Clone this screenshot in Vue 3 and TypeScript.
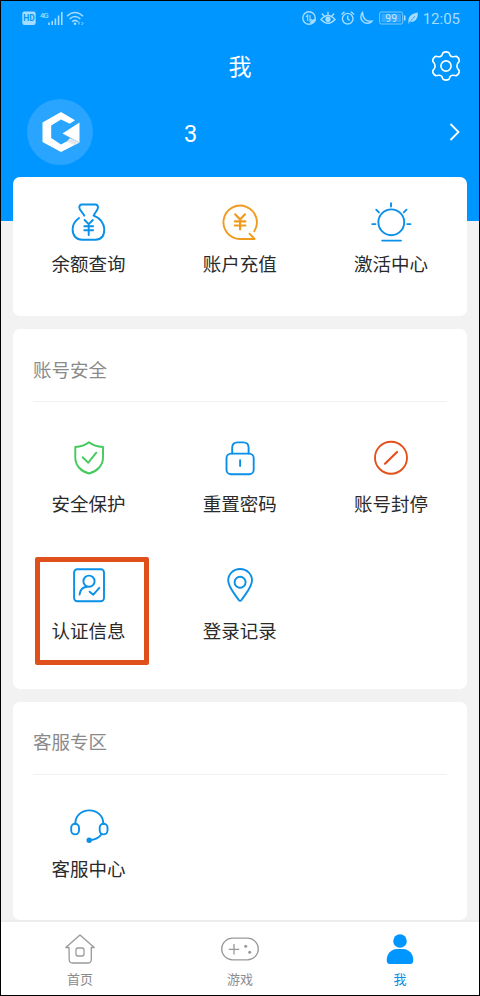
<script setup lang="ts">
interface Entry {
  icon: string
  label: string
  tone: string
  marked?: boolean
}
interface Section {
  key: string
  title?: string
  items: Entry[]
}

const sections: Section[] = [
  {
    key: 'wallet',
    items: [
      { icon: 'bag', label: '余额查询', tone: 'blue' },
      { icon: 'recharge', label: '账户充值', tone: 'amber' },
      { icon: 'bulb', label: '激活中心', tone: 'blue' },
    ],
  },
  {
    key: 'security',
    title: '账号安全',
    items: [
      { icon: 'shield', label: '安全保护', tone: 'green' },
      { icon: 'lock', label: '重置密码', tone: 'blue' },
      { icon: 'ban', label: '账号封停', tone: 'red' },
      { icon: 'identity', label: '认证信息', tone: 'blue', marked: true },
      { icon: 'pin', label: '登录记录', tone: 'blue' },
    ],
  },
  {
    key: 'service',
    title: '客服专区',
    items: [{ icon: 'headset', label: '客服中心', tone: 'blue' }],
  },
]

const tabs = [
  { icon: 'home', label: '首页', active: false },
  { icon: 'game', label: '游戏', active: false },
  { icon: 'me', label: '我', active: true },
]
</script>

<template>
  <div class="phone">
    <header class="header">
      <div class="status">
        <svg class="status-left" viewBox="0 0 64 18">
          <rect x="0.3" y="2.5" width="13.400" height="13.500" rx="2.200" fill="currentColor" />
          <text x="7" y="12.300" class="hd" text-anchor="middle">HD</text>
          <text x="18" y="8.500" class="net">4G</text>
          <path d="M27 13.500v2.500M30.200 12v4M33.400 9.500v6.500M36.600 6.500v9.500M39.800 3v13" stroke="currentColor" stroke-width="1.600" fill="none" />
          <path d="M45 7.200Q53-.2 61 7.200M47.600 10Q53 5 58.400 10M50 12.700Q53 10 56 12.700" stroke="currentColor" stroke-width="1.500" fill="none" />
          <circle cx="53" cy="14.700" r="1.300" fill="currentColor" />
          <path d="M57 12.500v3M59.500 13l1.500 1.500-1.500 1.500" stroke="currentColor" fill="none" />
        </svg>
        <div class="status-right">
          <svg class="status-icons" viewBox="0 0 118 18" fill="none" stroke="currentColor" stroke-width="1.400">
            <circle cx="7" cy="9" r="6.200" />
            <path d="M5.700 12V6l-1.800 1.800M8 6v6l1.800-1.800" stroke-width="1.100" />
            <path d="M8 14.500q0-4.500 6-4.500-.5 5-6 4.500z" fill="currentColor" stroke="none" />
            <path d="M19 10.500Q26 2.500 33 10.500Q26 18 19 10.500zM20 4.500l2 2.500M26 2.800v3M32 4.500l-2 2.500" />
            <circle cx="26" cy="10.300" r="2" fill="currentColor" />
            <circle cx="45.700" cy="9.700" r="5.300" />
            <path d="M45.700 6.500v3.500l2 1.500M39.500 5.500l3-2.700M52 5.500l-3-2.700" />
            <path d="M60.500 3.500A6 6 0 1 0 70 12.200Q61 13 60.500 3.500z" />
            <rect x="77.700" y="3" width="23" height="12" rx="1.500" stroke-width="1" opacity=".75" />
            <rect x="79.500" y="4.800" width="19.500" height="8.400" fill="currentColor" stroke="none" opacity=".3" />
            <path d="M102.700 6.500v5" stroke-width="1.600" />
            <text x="89.200" y="12.700" class="battery" text-anchor="middle">99</text>
            <path d="M106.500 14.500Q105 5 116 3.500Q116 13 108 13.200L106.500 15z" fill="currentColor" stroke="none" />
            <path d="M107 14l6-7" stroke="#0096ff" stroke-width=".7" />
          </svg>
          <span class="clock">12:05</span>
        </div>
      </div>

      <div class="titlebar">
        <span></span>
        <h1 class="page-title">我</h1>
        <svg class="gear" viewBox="0 0 32 32" fill="none" stroke="#fff" stroke-width="1.600" stroke-linejoin="round">
          <path d="M13 2.800Q16 .9 19 2.800L20 5.300Q21.300 7.200 23.500 6.700L26.200 6.300Q29.400 7.900 29.300 11.300L27.600 13.500Q26.300 16 27.600 18.500L29.300 20.700Q29.400 24.100 26.200 25.700L23.500 25.300Q21.300 24.800 20 26.700L19 29.200Q16 31.100 13 29.200L12 26.700Q10.700 24.800 8.500 25.300L5.800 25.700Q2.600 24.100 2.700 20.700L4.400 18.500Q5.700 16 4.400 13.500L2.700 11.300Q2.600 7.900 5.800 6.300L8.500 6.700Q10.700 7.200 12 5.300Z" />
          <circle cx="16" cy="16" r="5.100" />
        </svg>
      </div>

      <div class="profile">
        <div class="avatar">
          <svg viewBox="0 0 66 66">
            <path d="M34 13L48 21.200L42.800 24.800L34 20.600L24.200 26.500V39L34 45.500L40 42.300L52.500 43.500L34 53L15.500 43V23.500Z" fill="#fff" />
            <path d="M52.500 23.500V43.500L35.500 34.500Z" fill="#fff" />
            <path d="M40 42.300L43 39L52.500 43.500L47 46Z" fill="#e3e7ea" />
          </svg>
        </div>
        <span class="user-name">3</span>
        <svg class="chevron" viewBox="0 0 12 20"><path d="M1.500 2L9.500 10L1.500 18" fill="none" stroke="#fff" stroke-width="1.800" /></svg>
      </div>
    </header>

    <main class="content">
      <section v-for="section in sections" :key="section.key" class="card" :class="section.key">
        <h2 v-if="section.title" class="card-title">{{ section.title }}</h2>
        <div class="grid">
          <div v-for="item in section.items" :key="item.label" class="entry" :class="{ marked: item.marked }">
            <svg class="icon" :class="item.tone" viewBox="0 0 44 44">
              <template v-if="item.icon === 'bag'">
                <path d="M17.300 17.700C16 14.500 12.300 12 12.300 9.500Q12.300 6.500 15 6.500H28.300Q31 6.500 31 9.500C31 12 28 14.500 26.600 17.700C33 19.500 37.300 26 37.300 31.300C37.300 38 34 41.700 28.500 41.700H15C9.500 41.700 5.600 38 5.600 31.300C5.600 27 8 23 12 20" />
                <path d="M17.600 22L21.700 26.200L25.800 22M21.700 26.200V37M17.300 28.300h8.800M17.300 32.300h8.800" />
              </template>
              <template v-else-if="item.icon === 'recharge'">
                <path d="M36.300 33.200A16.700 16.700 0 1 0 22 41H36.600L31.500 35.700" />
                <path class="bold" d="M17.200 16.300L22.100 21.500L27 16.300M22.100 21.500V31.500M16.800 23.300h10.600M16.800 27.500h10.600" />
              </template>
              <template v-else-if="item.icon === 'bulb'">
                <circle cx="22.300" cy="24.300" r="12.900" />
                <path d="M22 5.200V8.500M3.200 26.100h3.300M38.200 26.100h3.300M7.200 11.700l2.700 2.700M37.500 11.700l-2.700 2.700M13.200 42.600h18.800" />
              </template>
              <template v-else-if="item.icon === 'shield'">
                <path d="M22 4.300Q16.500 8.600 8.300 9V19.500C8.300 27.500 14 33.500 22 35.500C30 33.500 36 27.500 36 19.500V9Q27.500 8.600 22 4.300Z" />
                <path d="M15.600 19.300L21.300 24.700L29.300 14.700" />
              </template>
              <template v-else-if="item.icon === 'lock'">
                <rect x="8.500" y="15.600" width="27.200" height="20.600" rx="4.500" />
                <path d="M14.200 15.600V9.800Q14.200 4.400 19.600 4.400H25.200Q30.600 4.400 30.600 9.800V15.600M22.100 22.300V28" />
              </template>
              <template v-else-if="item.icon === 'ban'">
                <circle cx="22" cy="19.700" r="16" />
                <path class="bold" d="M16 25.700L28 14" />
              </template>
              <template v-else-if="item.icon === 'identity'">
                <rect x="7.100" y="4.300" width="29.900" height="32" rx="3.200" />
                <circle cx="22" cy="16.200" r="5.600" />
                <path d="M12.600 29.500Q13.300 22.500 20 21.700M22.600 26.700L26.300 29.700L32.300 22.800" />
              </template>
              <template v-else-if="item.icon === 'pin'">
                <path d="M22.100 4C15.300 4 10.200 9.200 10.200 15.500C10.200 22 16 28 20.600 34.800Q22.100 37 23.600 34.800C28.200 28 34 22 34 15.500C34 9.200 28.900 4 22.100 4Z" />
                <circle cx="22.100" cy="17.200" r="5.500" />
              </template>
              <template v-else>
                <path d="M8.300 20.700C8.300 13 14.300 7.400 22.300 7.400S36.300 13 36.300 20.700M34.500 31.300Q31 36.500 22.300 37.300" />
                <rect x="4.200" y="20.700" width="7.800" height="10.700" rx="3.900" />
                <rect x="32.700" y="20.700" width="7.800" height="10.700" rx="3.900" />
                <circle class="solid" cx="22.200" cy="37.300" r="1.800" />
              </template>
            </svg>
            <span class="label">{{ item.label }}</span>
          </div>
        </div>
      </section>
    </main>

    <nav class="tabbar">
      <div v-for="tab in tabs" :key="tab.icon" class="tab" :class="{ active: tab.active }">
        <svg class="tab-icon" viewBox="0 0 40 34">
          <template v-if="tab.icon === 'home'">
            <path d="M9 15.500H5.800L20 3L34.200 15.500H31.300V27.500Q31.300 31 27.800 31H12.700Q9.200 31 9.200 27.500Z" />
            <rect x="16" y="16" width="8" height="8" rx="2" />
          </template>
          <template v-else-if="tab.icon === 'game'">
            <rect x="1.700" y="6.200" width="36.600" height="21.600" rx="10.800" />
            <path d="M8.800 17.300h10.400M14 12.100v10.400" />
            <circle class="dot" cx="25.700" cy="14.200" r="1.500" />
            <circle class="dot" cx="29.700" cy="20.200" r="1.500" />
          </template>
          <template v-else>
            <circle class="dot" cx="20" cy="9" r="6.800" />
            <path class="dot" d="M17 17H23C29 17 33.300 22 33.300 28Q33.300 32 30.300 32H9.700Q6.700 32 6.700 28C6.700 22 11 17 17 17Z" />
          </template>
        </svg>
        <span>{{ tab.label }}</span>
      </div>
    </nav>
  </div>
</template>

<style>
body {
  margin: 0;
}
</style>

<style scoped>
.phone {
  box-sizing: border-box;
  width: 480px;
  height: 996px;
  border: 1px solid #000;
  background: #f2f2f2;
  font-family: Roboto, "Noto Sans CJK SC", sans-serif;
  display: flex;
  flex-direction: column;
  overflow: hidden;
}
.header {
  height: 220px;
  flex: none;
  background: #0096ff;
  color: #fff;
}
.status {
  height: 34px;
  padding: 0 19px 0 21px;
  display: flex;
  justify-content: space-between;
  align-items: center;
  color: #a5dcff;
}
.status-left {
  width: 64px;
  height: 18px;
}
.hd {
  font-size: 8.500px;
  font-weight: 700;
  fill: #0096ff;
}
.net {
  font-size: 7.500px;
  font-weight: 500;
  letter-spacing: -0.8px;
  fill: currentColor;
}
.status-right {
  display: flex;
  align-items: center;
  gap: 3px;
}
.status-icons {
  width: 118px;
  height: 18px;
}
.battery {
  font-size: 10.500px;
  fill: #c4e8ff;
  stroke: none;
}
.clock {
  font-size: 15px;
  line-height: 18px;
  padding-top: 1px;
}
.titlebar {
  height: 64px;
  padding: 0 17px;
  display: grid;
  grid-template-columns: 32px 1fr 32px;
  align-items: center;
}
.page-title {
  margin: 0;
  padding-top: 2px;
  font-size: 23px;
  line-height: 34px;
  font-weight: 400;
  text-align: center;
}
.gear {
  width: 32px;
  height: 32px;
  margin-bottom: 3px;
}
.profile {
  height: 66px;
  padding: 0 18px 0 26px;
  display: flex;
  align-items: center;
}
.avatar {
  width: 66px;
  height: 66px;
  border-radius: 50%;
  background: #29a4ff;
}
.avatar svg {
  display: block;
  width: 66px;
  height: 66px;
}
.user-name {
  flex: 1;
  padding: 3px 0 0 91px;
  font-size: 23.500px;
  line-height: 28px;
}
.chevron {
  width: 12px;
  height: 20px;
}
.content {
  flex: none;
  height: 743px;
  margin-top: -44px;
  padding: 0 12.500px 0 12px;
  display: flex;
  flex-direction: column;
  gap: 13px;
}
.card {
  box-sizing: border-box;
  background: #fff;
  border-radius: 7px;
}
.wallet {
  height: 139px;
  padding-top: 21px;
}
.security {
  height: 359.500px;
}
.service {
  height: 218.500px;
}
.card-title {
  box-sizing: border-box;
  height: 73px;
  margin: 0 20px;
  padding-top: 27.500px;
  border-bottom: 1px solid #f2f2f2;
  font-size: 18.500px;
  line-height: 28px;
  font-weight: 400;
  color: #8a8a8a;
}
.grid {
  display: grid;
  grid-template-columns: repeat(3, 1fr);
  row-gap: 47.500px;
}
.security .grid {
  padding-top: 36px;
}
.service .grid {
  padding-top: 28px;
}
.entry {
  position: relative;
  display: flex;
  flex-direction: column;
  align-items: center;
  gap: 11px;
}
.marked::after {
  content: "";
  position: absolute;
  box-sizing: border-box;
  left: 22px;
  top: -8px;
  width: 114px;
  height: 108px;
  border: 5px solid #e0501b;
  border-radius: 2px;
}
.icon {
  width: 44px;
  height: 44px;
  fill: none;
  stroke: currentColor;
  stroke-width: 1.900;
  stroke-linecap: round;
  stroke-linejoin: round;
}
.icon .bold {
  stroke-width: 2.200;
}
.icon .solid {
  fill: currentColor;
}
.blue {
  color: #0a90e8;
}
.amber {
  color: #f09a20;
}
.green {
  color: #42ca5c;
}
.red {
  color: #e4501a;
}
.label {
  font-size: 18.500px;
  line-height: 24px;
  color: #2a2a2a;
}
.tabbar {
  box-sizing: border-box;
  height: 75px;
  flex: none;
  border-top: 2px solid #ededed;
  background: #fff;
  display: grid;
  grid-template-columns: repeat(3, 160px);
  justify-content: center;
  padding-top: 10px;
}
.tab {
  display: flex;
  flex-direction: column;
  align-items: center;
  gap: 4px;
  font-size: 13px;
  line-height: 19px;
  color: #8c8c8c;
}
.tab-icon {
  width: 40px;
  height: 34px;
  fill: none;
  stroke: #999;
  stroke-width: 1.300;
  stroke-linejoin: round;
}
.dot {
  fill: #999;
  stroke: none;
}
.active {
  color: #0a90e8;
}
.active .dot {
  fill: #0096ff;
}
</style>
